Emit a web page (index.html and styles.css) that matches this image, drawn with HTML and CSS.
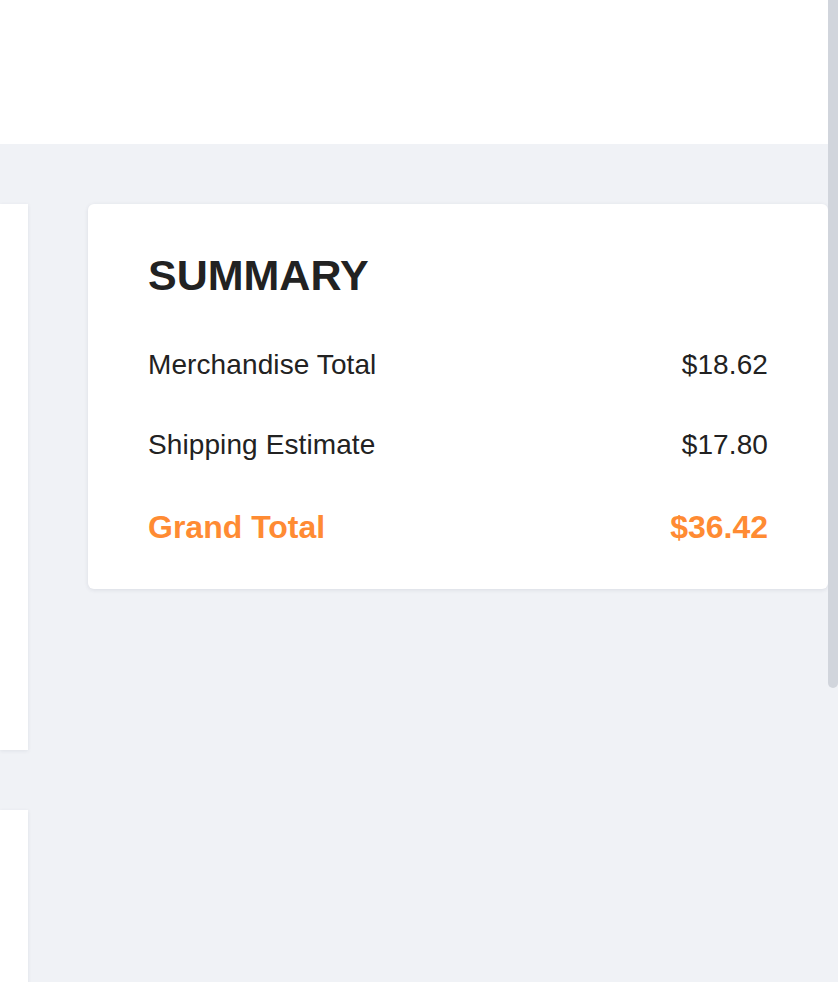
FILE: index.html
```html
<!DOCTYPE html>
<html lang="en">
<head>
<meta charset="utf-8">
<title>Summary</title>
<link rel="stylesheet" href="styles.css">
</head>
<body>
<div class="page">
  <header class="header"></header>
  <main class="main">
    <div class="left-col">
      <div class="panel panel-a"></div>
      <div class="panel panel-b"></div>
    </div>
    <section class="card">
      <h2 class="title">SUMMARY</h2>
      <div class="rows">
        <div class="row"><span>Merchandise Total</span><span>$18.62</span></div>
        <div class="row"><span>Shipping Estimate</span><span>$17.80</span></div>
        <div class="row total"><span>Grand Total</span><span>$36.42</span></div>
      </div>
    </section>
  </main>
</div>
<div class="scrollbar"></div>
</body>
</html>
```
FILE: styles.css
```css
html, body {
  margin: 0;
  padding: 0;
  height: 100%;
  overflow: hidden;
}
body {
  background: #f0f2f6;
  font-family: "Liberation Sans", Arial, sans-serif;
  color: #222222;
}
.page {
  width: 828px;
}
.header {
  height: 144px;
  background: #ffffff;
}
.main {
  display: flex;
  gap: 60px;
  padding-top: 60px;
  align-items: flex-start;
}
.left-col {
  width: 28px;
  display: flex;
  flex-direction: column;
  gap: 60px;
}
.panel {
  background: #ffffff;
  box-shadow: 0 1px 4px rgba(30, 40, 70, 0.08);
}
.panel-a {
  height: 546px;
}
.panel-b {
  height: 200px;
}
.card {
  flex: 1;
  background: #ffffff;
  border-radius: 6px;
  box-shadow: 0 1px 4px rgba(30, 40, 70, 0.10);
  padding: 50px 60px 42px 60px;
}
.title {
  margin: 0 0 49px 0;
  font-size: 43px;
  line-height: 42px;
  font-weight: 700;
  color: #222222;
}
.rows {
  display: flex;
  flex-direction: column;
  gap: 40px;
}
.row {
  display: flex;
  justify-content: space-between;
  font-size: 28px;
  line-height: 40px;
  letter-spacing: 0.1px;
}
.row.total {
  margin-top: 2px;
  font-size: 32px;
  font-weight: 700;
  letter-spacing: 0;
  color: #ff8b33;
}
.scrollbar {
  position: fixed;
  top: 0;
  right: 0;
  width: 10px;
  height: 688px;
  background: #d1d5dc;
  border-radius: 0 0 5px 5px;
}
```
